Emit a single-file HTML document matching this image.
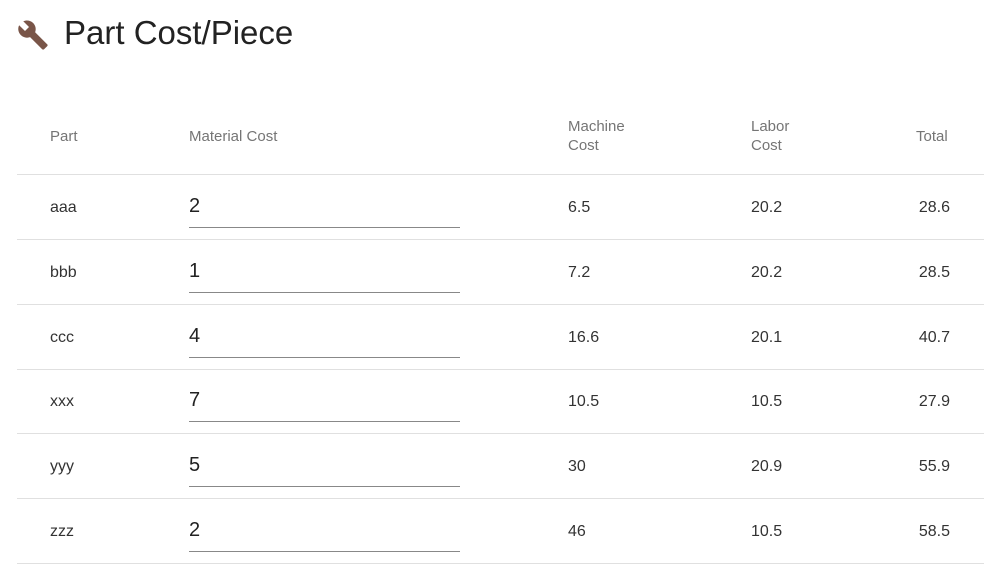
<!DOCTYPE html>
<html><head><style>
body{margin:0;background:#fff;width:1000px;height:579px;overflow:hidden;font-family:"Liberation Sans",sans-serif;position:relative}
.a{position:absolute;white-space:nowrap}
.h{color:#757575;font-size:15px;line-height:19px}
.c{color:#333;font-size:16px}
.line{position:absolute;left:17px;width:967px;height:1px;background:#e0e0e0}
.in{position:absolute;left:189px;width:271px;height:1px;background:#888}
.v{color:#222;font-size:20px}
</style></head><body>
<svg class="a" style="left:17px;top:19px" width="32" height="32" viewBox="0 0 24 24"><path fill="#795548" d="M22.7 19l-9.1-9.1c.9-2.3.4-5-1.5-6.9-2-2-5-2.4-7.4-1.3L9 6 6 9 1.6 4.7C.4 7.1.9 10.1 2.9 12.1c1.9 1.9 4.6 2.4 6.9 1.5l9.1 9.1c.4.4 1 .4 1.4 0l2.3-2.3c.5-.4.5-1.1.1-1.4z"/></svg>
<div class="a" style="left:64px;top:14px;font-size:33px;color:#222">Part Cost/Piece</div>
<div class="a h" style="left:50px;top:127px">Part</div>
<div class="a h" style="left:189px;top:127px">Material Cost</div>
<div class="a h" style="left:568px;top:117px">Machine<br>Cost</div>
<div class="a h" style="left:751px;top:117px">Labor<br>Cost</div>
<div class="a h" style="left:916px;top:127px">Total</div>
<div class="line" style="top:174px"></div>
<div id="rows"></div>
<script>
var d=[["aaa","2","6.5","20.2","28.6"],["bbb","1","7.2","20.2","28.5"],["ccc","4","16.6","20.1","40.7"],["xxx","7","10.5","10.5","27.9"],["yyy","5","30","20.9","55.9"],["zzz","2","46","10.5","58.5"]];
var h="";d.forEach(function(r,i){var t=175+i*64.8;
h+='<div class="a c" style="left:50px;top:'+(t+24)+'px">'+r[0]+'</div>';
h+='<div class="a v" style="left:189px;top:'+(t+20)+'px">'+r[1]+'</div>';
h+='<div class="in" style="top:'+(t+52)+'px"></div>';
h+='<div class="a c" style="left:568px;top:'+(t+24)+'px">'+r[2]+'</div>';
h+='<div class="a c" style="left:751px;top:'+(t+24)+'px">'+r[3]+'</div>';
h+='<div class="a c" style="right:50px;top:'+(t+24)+'px">'+r[4]+'</div>';
h+='<div class="line" style="top:'+Math.round(t+64)+'px"></div>';});
document.getElementById("rows").innerHTML=h;
</script>
</body></html>
